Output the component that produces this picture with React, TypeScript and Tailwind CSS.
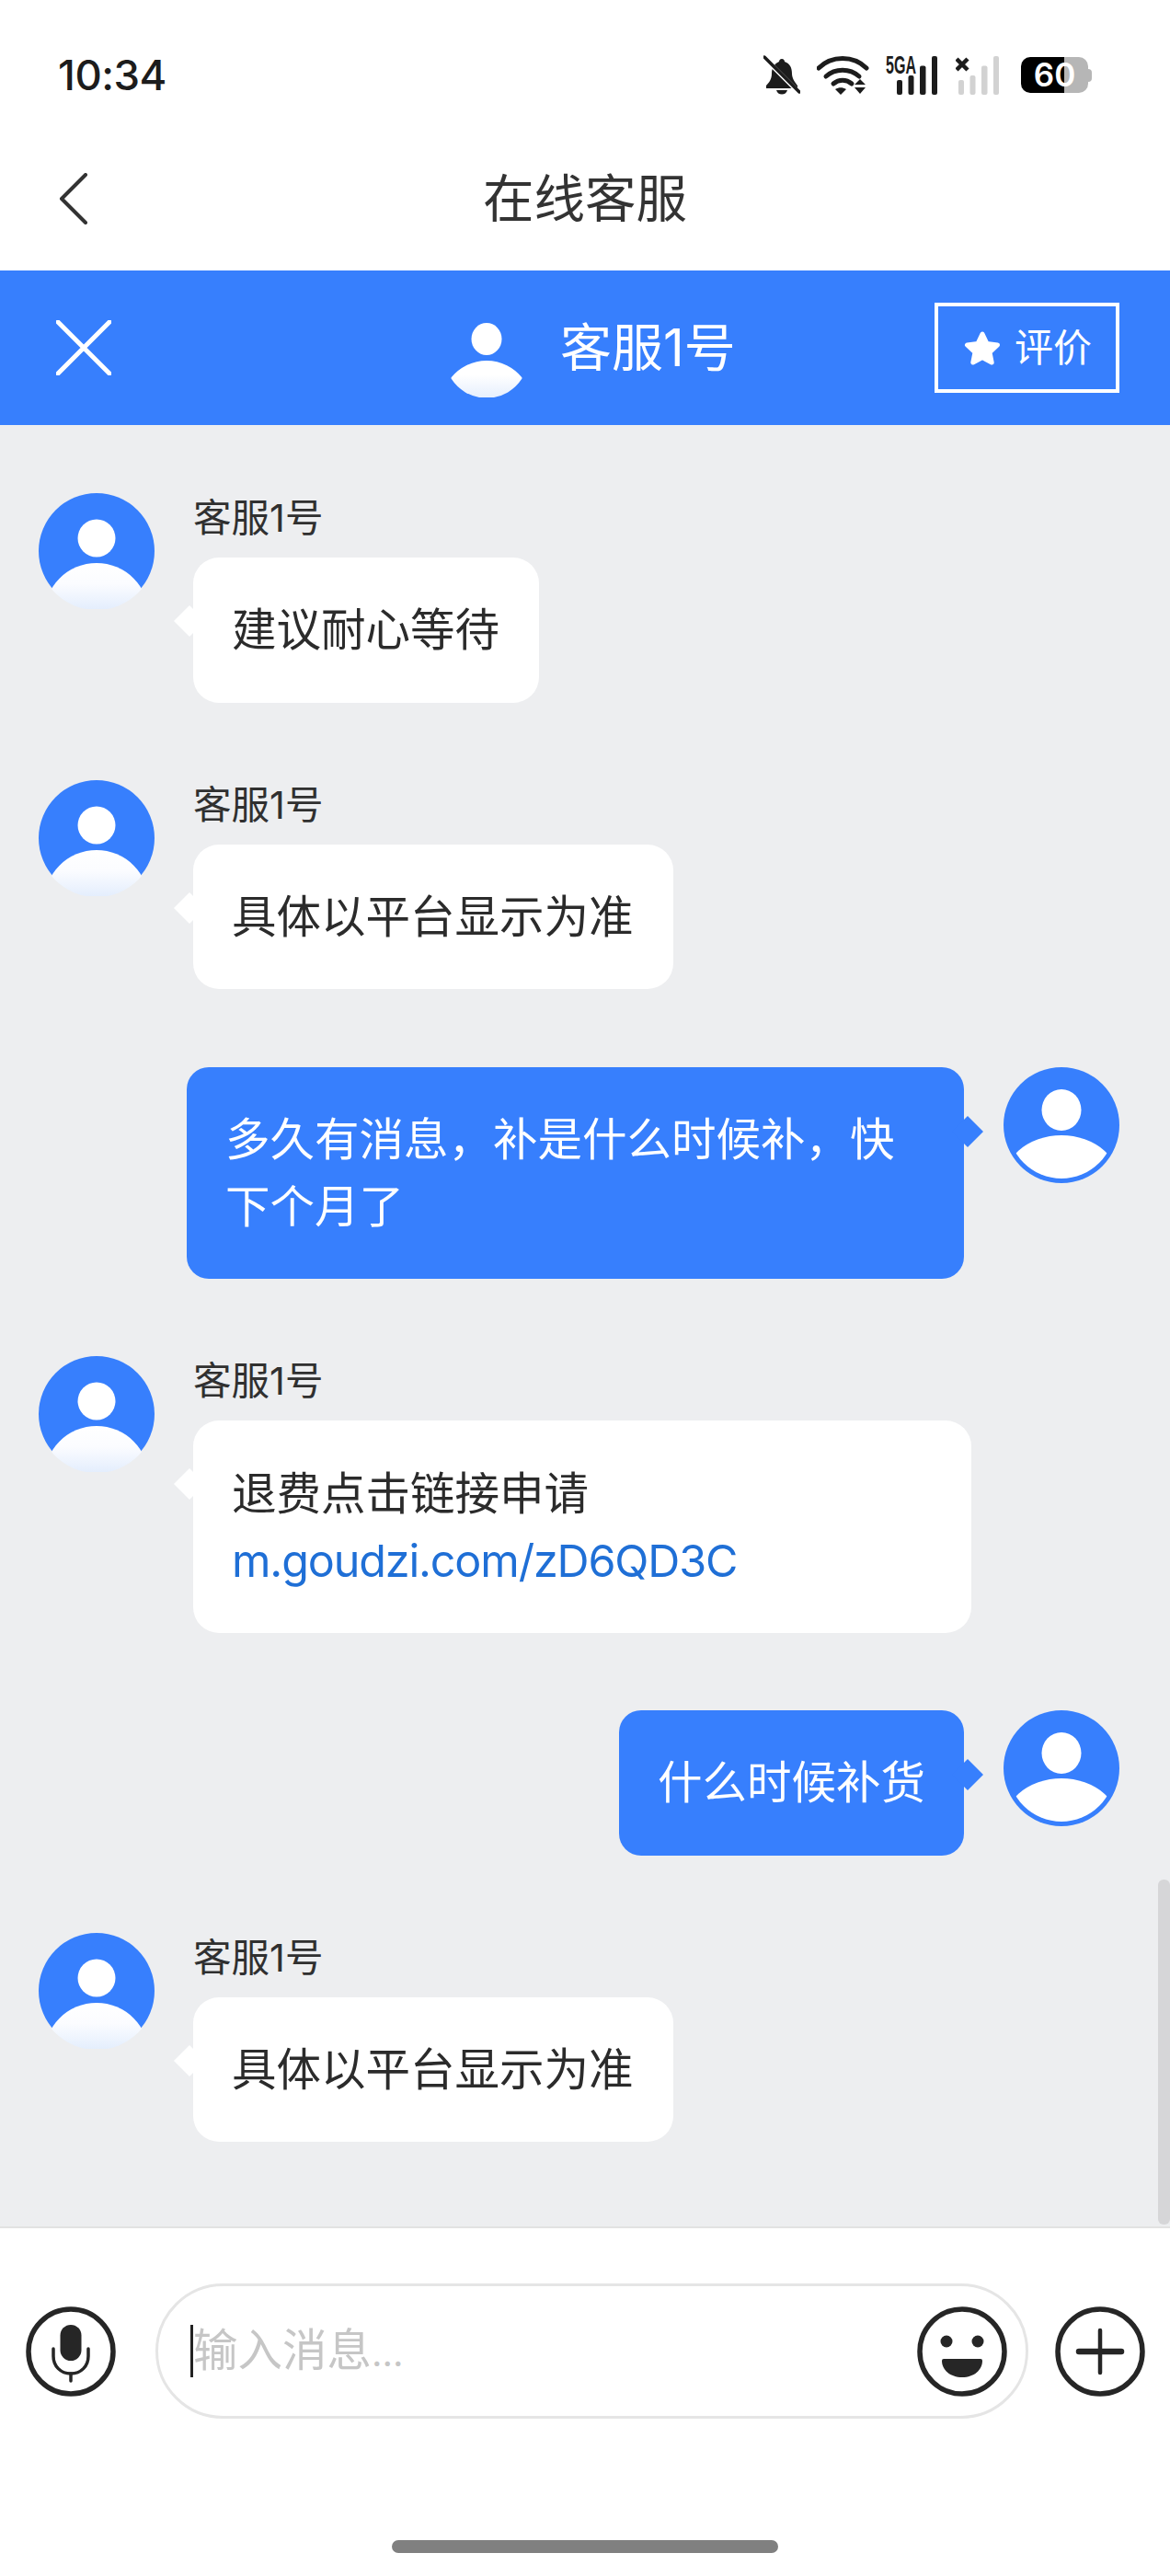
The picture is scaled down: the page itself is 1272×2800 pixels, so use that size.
import React, { useId } from 'react';

const BLUE = '#377ffd';

// round avatar; agent variant has a fading body, user variant a solid one
const Avatar = ({ user = false }: { user?: boolean }) => {
  const id = useId();
  return (
    <svg width="126" height="126" viewBox="0 0 126 126" className="shrink-0">
      <defs>
        <clipPath id={`${id}c`}>
          <circle cx="63" cy="63" r={user ? 58 : 64} />
        </clipPath>
        <linearGradient id={`${id}g`} gradientUnits="userSpaceOnUse" x1="0" y1="76" x2="0" y2="126">
          <stop offset="0" stopColor="#ffffff" />
          <stop offset="0.45" stopColor="#fbfcff" />
          <stop offset="1" stopColor="#e4eefd" />
        </linearGradient>
      </defs>
      <circle cx="63" cy="63" r="63" fill={BLUE} />
      {user ? (
        <>
          <ellipse cx="63" cy="46.500" rx="21.500" ry="22.500" fill="#fff" />
          <g clipPath={`url(#${id}c)`}>
            <ellipse cx="63" cy="131" rx="66" ry="57" fill="#fff" />
          </g>
        </>
      ) : (
        <>
          <circle cx="63" cy="49" r="20.500" fill="#fff" />
          <g clipPath={`url(#${id}c)`}>
            <circle cx="63" cy="133" r="57" fill={`url(#${id}g)`} />
          </g>
        </>
      )}
    </svg>
  );
};

const AgentMessage = ({ children, wide = false }: { children: React.ReactNode; wide?: boolean }) => (
  <div className="flex gap-[42px] pl-[42px]">
    <Avatar />
    <div className="flex flex-col items-start">
      <div className="mt-[7px] mb-[23px] h-[40px] text-[41.5px] leading-[40px] text-[#303030]">客服1号</div>
      <div
        className={`relative rounded-[28px] bg-white py-[42.25px] pr-[43px] pl-[42px] text-[48.5px] leading-[73px] text-[#2b2b2b] ${wide ? 'w-[846px]' : ''}`}
      >
        <span className="absolute top-[57px] left-[-16px] h-[24px] w-[24px] rotate-45 bg-white" />
        {children}
      </div>
    </div>
  </div>
);

const UserMessage = ({ children, wide = false }: { children: React.ReactNode; wide?: boolean }) => (
  <div className="flex justify-end gap-[43px] pr-[55px]">
    <div
      className={`relative rounded-[24px] bg-[#377ffd] px-[42px] py-[42.25px] text-[48.5px] leading-[73px] text-white ${wide ? 'w-[845px]' : ''}`}
    >
      <span className="absolute top-[58px] right-[-16px] h-[24px] w-[24px] rotate-45 bg-[#377ffd]" />
      {children}
    </div>
    <Avatar user />
  </div>
);

const StatusBar = () => (
  <div className="flex h-[138px] items-start justify-between pt-[60px] pr-[85px] pl-[63px]">
    <div className="h-[43px] text-[45.5px] leading-[43px] font-medium tracking-[-0.5px] text-[#1c1c1c]">10:34</div>
    <div className="flex h-[43px] items-center">
      {/* muted bell */}
      <svg width="40" height="43" viewBox="0 0 40 43" fill="#1c1c1c">
        <path d="M20 4c2 0 3 1.500 3 3 6 2 8 7 8 13 0 5 3 9 6 13v3H3v-3c3-3 6-7 6-13 0-6 3-11 8-13 0-1.500 1-3 3-3z" />
        <path d="M14 38h12c-1 3-3 4.500-6 4.500S15 41 14 38z" />
        <path d="M2 4l36 36" stroke="#ffffff" strokeWidth="5" />
        <path d="M1 2l38 38" stroke="#1c1c1c" strokeWidth="3.500" strokeLinecap="round" />
      </svg>
      {/* wifi with up/down arrows */}
      <svg width="57" height="43" viewBox="0 0 57 43" className="ml-[18px]" fill="none" stroke="#1c1c1c" strokeLinecap="round">
        <path d="M2 14C16 0 40 0 54 14" strokeWidth="5" />
        <path d="M10 23c10-9 26-9 36 0" strokeWidth="5" />
        <path d="M18 31c6-5 14-5 20 0" strokeWidth="5" />
        <path d="M20 37c4-2.500 8-2.500 12 0l-6 6z" fill="#1c1c1c" stroke="none" />
        <path d="M47 26l6 6H41zM41 35h12l-6 7z" fill="#1c1c1c" stroke="none" />
      </svg>
      {/* 5GA signal */}
      <svg width="56" height="43" viewBox="0 0 56 43" className="ml-[18px] overflow-visible">
        <text x="0" y="20" fontSize="27" fontWeight="700" fontFamily="Liberation Sans" fill="#1c1c1c" textLength="33" lengthAdjust="spacingAndGlyphs">
          5GA
        </text>
        <rect x="12" y="27" width="6" height="16" rx="2" fill="#1c1c1c" />
        <rect x="24.500" y="22" width="6" height="21" rx="2" fill="#1c1c1c" />
        <rect x="37" y="11.500" width="6.500" height="31.500" rx="2" fill="#1c1c1c" />
        <rect x="50" y="1" width="6" height="42" rx="2" fill="#1c1c1c" />
      </svg>
      {/* second sim, no service */}
      <svg width="47" height="43" viewBox="0 0 47 43" className="ml-[20px]">
        <path d="M1 4l12 12M13 4L1 16" stroke="#1c1c1c" strokeWidth="4.500" />
        <rect x="3" y="27" width="6" height="16" rx="2" fill="#d2d2d2" />
        <rect x="15.500" y="22" width="6" height="21" rx="2" fill="#d2d2d2" />
        <rect x="28" y="11.500" width="6.500" height="31.500" rx="2" fill="#d2d2d2" />
        <rect x="41" y="1" width="6" height="42" rx="2" fill="#d2d2d2" />
      </svg>
      {/* battery */}
      <div className="ml-[24px] flex items-center">
        <div className="flex h-[39px] w-[73px] items-center justify-center rounded-[10px] bg-[linear-gradient(90deg,#000_64%,#b6b6b6_64%)] text-[35px] leading-none font-semibold text-white">
          60
        </div>
        <div className="h-[14px] w-[4px] rounded-r-[4px] bg-[#b6b6b6]" />
      </div>
    </div>
  </div>
);

const NavBar = () => (
  <div className="grid h-[156px] grid-cols-[1fr_auto_1fr] items-center">
    <div className="pl-[64px]">
      <svg width="32" height="56" viewBox="0 0 32 56" fill="none" stroke="#333" strokeWidth="4" strokeLinecap="round" strokeLinejoin="round">
        <path d="M29 2L3 28l26 26" />
      </svg>
    </div>
    <div className="text-[55.5px] leading-none text-[#333]">在线客服</div>
    <div />
  </div>
);

const ChatHeader = () => (
  <div className="flex h-[168px] items-center bg-[#377ffd] pr-[55px] pl-[61px] text-white">
    <svg width="60" height="60" viewBox="0 0 60 60" fill="none" stroke="#fff" strokeWidth="5" strokeLinecap="round">
      <path d="M2 2l56 56M58 2L2 58" />
    </svg>
    <div className="ml-[368px] flex items-center gap-[40px]">
      <svg width="80" height="81" viewBox="0 0 80 81" className="mt-[26px]">
        <defs>
          <linearGradient id="hd" gradientUnits="userSpaceOnUse" x1="0" y1="40" x2="0" y2="81">
            <stop offset="0.4" stopColor="#ffffff" />
            <stop offset="1" stopColor="#e6effd" />
          </linearGradient>
        </defs>
        <ellipse cx="40" cy="17.500" rx="16.500" ry="17.500" fill="#fff" />
        <path
          d="M3 60A48 48 0 0 1 77 60A44 44 0 0 1 3 60Z"
          fill="url(#hd)"
          stroke="url(#hd)"
          strokeWidth="3"
          strokeLinejoin="round"
        />
      </svg>
      <span className="text-[56px] leading-none">客服1号</span>
    </div>
    <div className="ml-auto flex h-[98px] w-[201px] items-center border-[4px] border-white pl-[28px]">
      <svg width="40" height="38" viewBox="0 0 40 38" fill="#fff" stroke="#fff" strokeWidth="5" strokeLinejoin="round">
        <path d="M20 4l5 10.500 11.500 1.500-8.500 8 2.200 11L20 29.500 9.800 35 12 24l-8.500-8L15 14.500z" />
      </svg>
      <span className="ml-[15px] text-[42px] leading-none">评价</span>
    </div>
  </div>
);

const InputBar = () => (
  <div className="flex h-[380px] flex-col border-t-[2px] border-[#e2e2e2] bg-white">
    <div className="mt-[60px] flex items-center pl-[28px]">
      <svg width="98" height="98" viewBox="0 0 98 98" fill="none" stroke="#262626" strokeWidth="5.500">
        <circle cx="49" cy="49" r="46" />
        <rect x="37.500" y="20" width="23" height="39" rx="11.500" fill="#262626" stroke="none" />
        <path d="M30 46v8c0 11 8 19 19 19s19-8 19-19v-8" strokeWidth="3.500" strokeLinecap="round" />
        <path d="M49 73v8" strokeWidth="3.500" strokeLinecap="round" />
      </svg>
      <div className="ml-[43px] flex h-[147px] w-[949px] items-center rounded-full border-[3px] border-[#e5e5e5] pr-[20px] pl-[35px]">
        <span className="h-[57px] w-[3px] bg-[#222]" />
        <span className="text-[48.5px] leading-none text-[#c6c6c6]">
          输入消息<span className="text-[40px]">...</span>
        </span>
        <svg width="98" height="98" viewBox="0 0 98 98" className="ml-auto" fill="none" stroke="#262626" strokeWidth="5.500">
          <circle cx="49" cy="49" r="46" />
          <circle cx="32" cy="38" r="6.500" fill="#262626" stroke="none" />
          <circle cx="66" cy="38" r="6.500" fill="#262626" stroke="none" />
          <path d="M27 59a2 2 0 0 1 2-2h40a2 2 0 0 1 2 2c0 10-9 18-22 18s-22-8-22-18z" fill="#262626" stroke="none" />
        </svg>
      </div>
      <svg width="98" height="98" viewBox="0 0 98 98" className="ml-[29px]" fill="none" stroke="#262626" strokeWidth="5.500">
        <circle cx="49" cy="49" r="46" />
        <path d="M49 26v46" strokeWidth="4.500" strokeLinecap="round" />
        <path d="M26 49h46" strokeWidth="6.500" strokeLinecap="round" />
      </svg>
    </div>
    <div className="mt-auto mb-[25px] h-[14px] w-[420px] self-center rounded-full bg-[#808080]" />
  </div>
);

const App = () => {
  return (
    <div className="flex h-[2800px] w-full flex-col bg-white font-[Inter,'Noto_Sans_CJK_SC',sans-serif]">
      <StatusBar />
      <NavBar />
      <ChatHeader />
      <div className="relative flex flex-1 flex-col gap-[84.25px] bg-[#edeef0] pt-[74px]">
        <AgentMessage>建议耐心等待</AgentMessage>
        <AgentMessage>具体以平台显示为准</AgentMessage>
        <UserMessage wide>多久有消息，补是什么时候补，快下个月了</UserMessage>
        <AgentMessage wide>
          <div>退费点击链接申请</div>
          <div className="tracking-[-1.15px] text-[#1f6fd6]">m.goudzi.com/zD6QD3C</div>
        </AgentMessage>
        <UserMessage>什么时候补货</UserMessage>
        <AgentMessage>具体以平台显示为准</AgentMessage>
        {/* scrollbar */}
        <div className="absolute top-[1581px] right-0 bottom-[2px] w-[13px] rounded-[6px] bg-[#d6d6d8]" />
      </div>
      <InputBar />
    </div>
  );
};

export default App;
